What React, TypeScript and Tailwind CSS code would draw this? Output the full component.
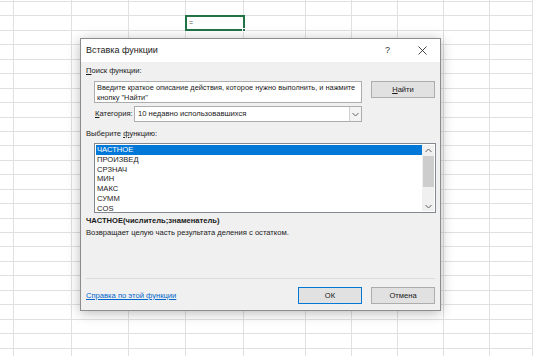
import React from "react";

const COLS = "grid-cols-[14px_58px_57px_57px_58px_62px_46px_46px_46px_46px_43px]";
const NCOLS = 11;
const NROWS = 26;

function Chevron({ dir = "down", className = "" }: { dir?: "up" | "down"; className?: string }) {
  return (
    <svg width="7" height="5" viewBox="0 0 7 5" className={className}>
      {dir === "down" ? (
        <polyline points="0.5,1 3.5,4 6.5,1" fill="none" stroke="#606060" strokeWidth="1" />
      ) : (
        <polyline points="0.5,4 3.5,1 6.5,4" fill="none" stroke="#606060" strokeWidth="1" />
      )}
    </svg>
  );
}

export default function App() {
  const cells: React.ReactNode[] = [];
  for (let r = 0; r < NROWS; r++) {
    for (let c = 0; c < NCOLS; c++) {
      const selected = r === 2 && c === 4;
      cells.push(
        <div key={`${r}-${c}`} className="relative border-r border-b border-[#e0e0e0]">
          {selected && (
            <div className="absolute -left-px -top-px w-[60px] h-[16px] border-2 border-[#217346] z-10">
              <span className="absolute left-[2px] top-[1px] text-[7px] leading-[10px] text-[#555]">=</span>
              <span className="absolute -right-[3px] -bottom-[3px] w-[4px] h-[4px] bg-[#217346] border border-white" />
            </div>
          )}
        </div>
      );
    }
  }

  const items = ["ЧАСТНОЕ", "ПРОИЗВЕД", "СРЗНАЧ", "МИН", "МАКС", "СУММ", "COS"];

  return (
    <div className="relative w-[533px] h-[356px] overflow-hidden bg-white font-['Liberation_Sans',Arial,sans-serif] text-[#1a1a1a]">
      <div className={`grid ${COLS} grid-rows-[2px] auto-rows-[14.45px]`}>{cells}</div>

      {/* Dialog */}
      <div className="absolute left-[80px] top-[38px] w-[361px] h-[273px] bg-[#f0f0f0] border border-[#8c8c8c] shadow-[0_2px_12px_rgba(0,0,0,0.28)] flex flex-col z-20">
        {/* Title bar */}
        <div className="h-[23px] bg-white flex items-center pl-[5px] shrink-0">
          <span className="text-[9px] text-[#1a1a1a]">Вставка функции</span>
          <div className="flex-1" />
          <span className="text-[9px] text-[#333] mr-[28px]">?</span>
          <svg width="9" height="9" viewBox="0 0 9 9" className="mr-[13px]">
            <line x1="0.5" y1="0.5" x2="8.5" y2="8.5" stroke="#333" strokeWidth="0.9" />
            <line x1="8.5" y1="0.5" x2="0.5" y2="8.5" stroke="#333" strokeWidth="0.9" />
          </svg>
        </div>

        <div className="flex flex-col pl-[5px] pr-[5px] text-[7.6px] leading-[10px] flex-1 whitespace-nowrap">
          <div className="mt-[4px] h-[10px]">
            <span className="underline">П</span>оиск функции:
          </div>

          <div className="mt-[5px] flex items-start">
            <div className="ml-[8px] w-[268px] h-[22px] bg-white border border-[#adadad] pl-[2px] pt-[1px] text-[7.4px] leading-[10px] overflow-hidden">
              <div>Введите краткое описание действия, которое нужно выполнить, и нажмите</div>
              <div>кнопку "Найти"</div>
            </div>
            <div className="ml-[9px] w-[64px] h-[17px] bg-[#e1e1e1] border border-[#adadad] flex items-center justify-center">
              <span>
                <span className="underline">Н</span>айти
              </span>
            </div>
          </div>

          <div className="mt-[3px] flex items-center h-[16px]">
            <span className="ml-[9px] w-[39px]">
              <span className="underline">К</span>атегория:
            </span>
            <div className="w-[228px] h-[16px] bg-white border border-[#adadad] flex items-center">
              <span className="pl-[3px] flex-1">10 недавно использовавшихся</span>
              <div className="w-[12px] h-full bg-[#f3f3f3] border-l border-[#d0d0d0] flex items-center justify-center">
                <Chevron />
              </div>
            </div>
          </div>

          <div className="mt-[6px] h-[11px] leading-[11px]">
            Выберите <span className="underline">ф</span>ункцию:
          </div>

          <div className="mt-[4px] ml-[8px] w-[342px] h-[70px] bg-white border border-[#828790] flex p-px">
            <div className="flex-1 flex flex-col">
              {items.map((it, i) => (
                <div
                  key={it}
                  className={`h-[9.8px] leading-[9.8px] pl-[1px] ${i === 0 ? "bg-[#0078d7] text-white" : ""}`}
                >
                  {it}
                </div>
              ))}
            </div>
            <div className="w-[12px] bg-[#f0f0f0] flex flex-col items-center">
              <div className="h-[10px] flex items-center justify-center">
                <Chevron dir="up" />
              </div>
              <div className="mt-[1px] w-[11px] h-[31px] bg-[#cdcdcd]" />
              <div className="flex-1" />
              <div className="h-[10px] flex items-center justify-center">
                <Chevron />
              </div>
            </div>
          </div>

          <div className="mt-[2px] h-[11px] leading-[11px] font-bold">ЧАСТНОЕ(числитель;знаменатель)</div>
          <div className="mt-[1px] h-[11px] leading-[11px]">Возвращает целую часть результата деления с остатком.</div>

          <div className="flex-1" />
          <div className="h-px bg-[#dcdcdc]" />
          <div className="mt-[8px] mb-[6px] flex items-center h-[17px]">
            <span className="text-[#0066cc] underline">Справка по этой функции</span>
            <div className="flex-1" />
            <div className="w-[64px] h-[17px] bg-[#e1e1e1] border border-[#0078d7] flex items-center justify-center">
              ОК
            </div>
            <div className="ml-[9px] w-[64px] h-[17px] bg-[#e1e1e1] border border-[#adadad] flex items-center justify-center">
              Отмена
            </div>
          </div>
        </div>
      </div>
    </div>
  );
}
